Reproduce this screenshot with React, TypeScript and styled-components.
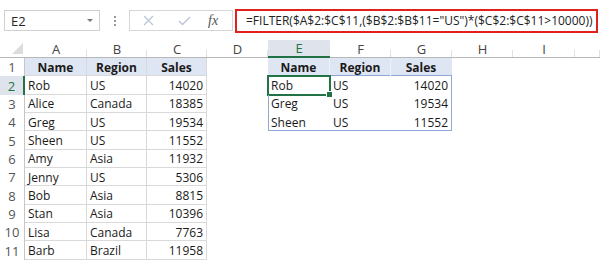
import React from 'react'
import styled, { createGlobalStyle, css } from 'styled-components'

const GlobalStyle = createGlobalStyle`
  html, body {
    margin: 0;
    padding: 0;
    background: #ffffff;
  }
  body {
    font-family: "Open Sans", "Noto Sans", "Liberation Sans", sans-serif;
    width: 600px;
    height: 261px;
    overflow: hidden;
  }
`

const GREEN = '#217346'
const BLUE = '#8eaadb'
const GRID = '#d9d9d9'
const HEAD_FILL = '#dfe6f3'

const Page = styled.div`
  display: flex;
  flex-direction: column;
  width: 600px;
  height: 261px;
  overflow: hidden;
`

const Toolbar = styled.div`
  display: flex;
  align-items: center;
  height: 40px;
  padding: 1px 2px 0 4px;
  box-sizing: border-box;
`

const NameBox = styled.div`
  display: flex;
  align-items: center;
  justify-content: space-between;
  width: 96px;
  height: 21px;
  box-sizing: border-box;
  border: 1px solid #d0d0d0;
  padding: 0 6px 0 6px;
  font-size: 13px;
  color: #262626;
`

const Caret = styled.span`
  width: 0;
  height: 0;
  border-left: 3px solid transparent;
  border-right: 3px solid transparent;
  border-top: 3px solid #7a7a7a;
`

const Dots = styled.div`
  width: 29px;
  display: flex;
  flex-direction: column;
  align-items: center;
  gap: 2px;

  span {
    width: 2px;
    height: 2px;
    background: #9a9a9a;
  }
`

const FxBox = styled.div`
  display: flex;
  align-items: center;
  width: 104px;
  height: 21px;
  box-sizing: border-box;
  border: 1px solid #d6d6d6;
  padding: 0 0 0 13px;
  gap: 24px;
`

const Fx = styled.span`
  font-family: "Liberation Serif", "DejaVu Serif", serif;
  font-style: italic;
  font-size: 14px;
  color: #555;
  margin-left: -7px;
`

const Formula = styled.div`
  flex: 1;
  margin-left: 2px;
  height: 24px;
  box-sizing: border-box;
  border: 2px solid #e3211c;
  display: flex;
  align-items: center;
  padding-left: 9px;
  font-size: 12px;
  color: #222;
  white-space: nowrap;
  overflow: hidden;
`

const Sheet = styled.div`
  display: grid;
  grid-template-columns: 25px 62px 60px 60px 61px 62px 61px 61px 61px 62px 1fr;
  grid-template-rows: 18px repeat(11, 18.35px);
`

const Corner = styled.div`
  position: relative;
  border-bottom: 1px solid #b7b7b7;

  &::after {
    content: '';
    position: absolute;
    right: 2px;
    bottom: 3px;
    width: 0;
    height: 0;
    border-left: 11px solid transparent;
    border-bottom: 11px solid #dcdcdc;
  }
`

const ColHead = styled.div<{ $active?: boolean }>`
  display: flex;
  align-items: center;
  justify-content: center;
  font-size: 13px;
  color: #444;
  border-bottom: 1px solid #b7b7b7;
  position: relative;

  &::after {
    content: '';
    position: absolute;
    right: 0;
    bottom: 0;
    width: 1px;
    height: 7px;
    background: #e0e0e0;
  }

  ${({ $active }) =>
    $active &&
    css`
      background: #dfe3ec;
      color: ${GREEN};
      border-bottom: 2px solid ${GREEN};
    `}
`

const RowHead = styled.div<{ $active?: boolean }>`
  display: flex;
  align-items: center;
  justify-content: center;
  font-size: 13px;
  color: #555;
  border-right: 1px solid #c6c6c6;
  box-sizing: border-box;

  ${({ $active }) =>
    $active &&
    css`
      background: #dfe3ec;
      color: ${GREEN};
      border-right: 2px solid ${GREEN};
    `}
`

type Edges = { t?: string; r?: string; b?: string; l?: string }

const edgeShadow = (e: Edges) => {
  const parts: string[] = []
  if (e.l) parts.push(`inset 1px 0 0 ${e.l}`)
  if (e.r) parts.push(`inset -1px 0 0 ${e.r}`)
  if (e.t) parts.push(`inset 0 1px 0 ${e.t}`)
  if (e.b) parts.push(`inset 0 -1px 0 ${e.b}`)
  return parts.length ? parts.join(', ') : 'none'
}

const Cell = styled.div<{ $align?: string; $bold?: boolean; $fill?: boolean; $edges?: Edges }>`
  position: relative;
  display: flex;
  align-items: center;
  justify-content: ${({ $align }) => $align || 'flex-start'};
  padding: 0 4px 0 3px;
  font-size: 12px;
  font-weight: ${({ $bold }) => ($bold ? 700 : 400)};
  color: #1a1a1a;
  white-space: nowrap;
  background: ${({ $fill }) => ($fill ? HEAD_FILL : 'transparent')};
  box-shadow: ${({ $edges }) => edgeShadow($edges || {})};
`

const Selection = styled.div`
  position: absolute;
  inset: -1px -1px -1px -1px;
  border: 2px solid ${GREEN};
  pointer-events: none;

  &::after {
    content: '';
    position: absolute;
    right: -4px;
    bottom: -4px;
    width: 5px;
    height: 5px;
    background: ${GREEN};
    border: 1px solid #fff;
  }
`

const source: [string, string, number][] = [
  ['Rob', 'US', 14020],
  ['Alice', 'Canada', 18385],
  ['Greg', 'US', 19534],
  ['Sheen', 'US', 11552],
  ['Amy', 'Asia', 11932],
  ['Jenny', 'US', 5306],
  ['Bob', 'Asia', 8815],
  ['Stan', 'Asia', 10396],
  ['Lisa', 'Canada', 7763],
  ['Barb', 'Brazil', 11958],
]

const result = source.filter(([, region, sales]) => region === 'US' && sales > 10000)

const letters = ['A', 'B', 'C', 'D', 'E', 'F', 'G', 'H', 'I', '']

function XIcon() {
  return (
    <svg width="11" height="11" viewBox="0 0 11 11">
      <path d="M1 1 L10 10 M10 1 L1 10" stroke="#b9c4d6" strokeWidth="1.2" fill="none" />
    </svg>
  )
}

function CheckIcon() {
  return (
    <svg width="13" height="10" viewBox="0 0 13 10">
      <path d="M1 5 L4.5 8.5 L12 1" stroke="#b9c4d6" strokeWidth="1.4" fill="none" />
    </svg>
  )
}

export default function App() {
  const rows: React.ReactNode[] = []

  for (let r = 1; r <= 11; r++) {
    const active = r === 2
    rows.push(
      <RowHead key={`h${r}`} $active={active}>
        {r}
      </RowHead>
    )

    // source table A:C
    const grid: Edges = { r: GRID, b: GRID }
    if (r === 1) {
      rows.push(
        <Cell key={`a${r}`} $align="center" $bold $fill $edges={grid}>Name</Cell>,
        <Cell key={`b${r}`} $align="center" $bold $fill $edges={grid}>Region</Cell>,
        <Cell key={`c${r}`} $align="center" $bold $fill $edges={grid}>Sales</Cell>
      )
    } else {
      const [name, region, sales] = source[r - 2]
      rows.push(
        <Cell key={`a${r}`} $edges={grid}>{name}</Cell>,
        <Cell key={`b${r}`} $edges={grid}>{region}</Cell>,
        <Cell key={`c${r}`} $align="flex-end" $edges={grid}>{sales}</Cell>
      )
    }

    rows.push(<Cell key={`d${r}`} />)

    // filter result E:G
    if (r === 1) {
      rows.push(
        <Cell key={`e${r}`} $align="center" $bold $fill $edges={{ r: '#eef1f8', b: BLUE }}>Name</Cell>,
        <Cell key={`f${r}`} $align="center" $bold $fill $edges={{ r: '#eef1f8', b: BLUE }}>Region</Cell>,
        <Cell key={`g${r}`} $align="center" $bold $fill $edges={{ b: BLUE }}>Sales</Cell>
      )
    } else if (r - 2 < result.length) {
      const [name, region, sales] = result[r - 2]
      const last = r - 2 === result.length - 1
      rows.push(
        <Cell key={`e${r}`} $edges={{ l: BLUE, b: last ? BLUE : undefined }}>
          {name}
          {r === 2 && <Selection />}
        </Cell>,
        <Cell key={`f${r}`} $edges={{ b: last ? BLUE : undefined }}>{region}</Cell>,
        <Cell key={`g${r}`} $align="flex-end" $edges={{ r: BLUE, b: last ? BLUE : undefined }}>
          {sales}
        </Cell>
      )
    } else {
      rows.push(<Cell key={`e${r}`} />, <Cell key={`f${r}`} />, <Cell key={`g${r}`} />)
    }

    rows.push(<Cell key={`h${r}x`} />, <Cell key={`i${r}`} />, <Cell key={`j${r}`} />)
  }

  return (
    <Page>
      <GlobalStyle />
      <Toolbar>
        <NameBox>
          E2
          <Caret />
        </NameBox>
        <Dots>
          <span />
          <span />
          <span />
        </Dots>
        <FxBox>
          <XIcon />
          <CheckIcon />
          <Fx>fx</Fx>
        </FxBox>
        <Formula>=FILTER($A$2:$C$11,($B$2:$B$11="US")*($C$2:$C$11&gt;10000))</Formula>
      </Toolbar>
      <Sheet>
        <Corner />
        {letters.map((l, i) => (
          <ColHead key={i} $active={l === 'E'}>
            {l}
          </ColHead>
        ))}
        {rows}
      </Sheet>
    </Page>
  )
}
